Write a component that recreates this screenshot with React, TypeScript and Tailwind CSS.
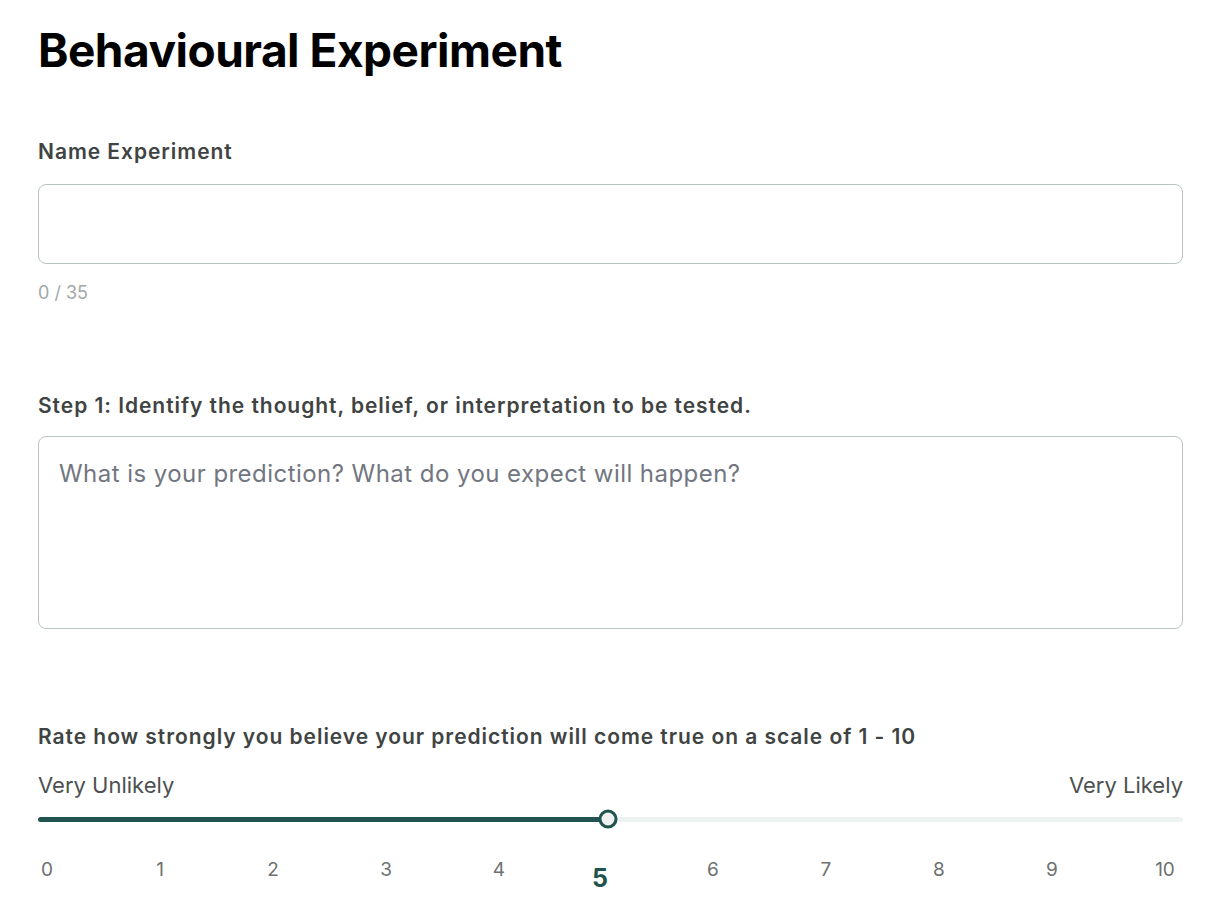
import React, { useState } from 'react';

const font = { fontFamily: 'Inter, "Noto Sans", sans-serif' };

const App: React.FC = () => {
  const [name, setName] = useState('');
  const [prediction, setPrediction] = useState('');
  const [rating] = useState(5);
  const ticks = Array.from({ length: 11 }, (_, i) => i);
  const pct = (rating / 10) * 100;

  return (
    <div className="min-h-screen bg-white pl-[38px] pr-[49px] pt-[22px]" style={font}>
      <h1 className="text-[46px] leading-[56px] font-bold text-black tracking-[-0.5px]">Behavioural Experiment</h1>

      <div className="mt-[62px]">
        <label className="block text-[21px] leading-[24px] font-semibold tracking-[0.95px] text-[#3f4443]">Name Experiment</label>
        <input
          value={name}
          onChange={(e) => setName(e.target.value)}
          maxLength={35}
          className="mt-[20px] block w-full h-[80px] rounded-[8px] border border-[#b9c4c2] px-5 text-[22px] text-[#333] outline-none"
        />
        <p className="mt-[18px] text-[18px] leading-[22px] text-[#a3a8a7]">{name.length} / 35</p>
      </div>

      <div className="mt-[90px]">
        <label className="block text-[21px] leading-[24px] font-semibold tracking-[0.95px] text-[#3f4443]">
          Step 1: Identify the thought, belief, or interpretation to be tested.
        </label>
        <textarea
          value={prediction}
          onChange={(e) => setPrediction(e.target.value)}
          placeholder="What is your prediction? What do you expect will happen?"
          className="mt-[18px] block w-full h-[193px] resize-none rounded-[8px] border border-[#b9c4c2] px-5 py-[22px] text-[24px] leading-[30px] tracking-[0.45px] text-[#333] placeholder:text-[#727680] outline-none"
        />
      </div>

      <div className="mt-[96px]">
        <label className="block text-[21px] leading-[24px] font-semibold tracking-[0.95px] text-[#3f4443]">
          Rate how strongly you believe your prediction will come true on a scale of 1 - 10
        </label>
        <div className="mt-[22px] flex justify-between text-[22px] leading-[28px] text-[#4d5150]">
          <span>Very Unlikely</span>
          <span>Very Likely</span>
        </div>
        <div className="relative mt-[11px] h-[18px] flex items-center">
          <div className="h-[5px] w-full rounded-full bg-[#eef2f1]">
            <div className="h-full rounded-full bg-[#22544f]" style={{ width: `${pct}%` }} />
          </div>
          <div
            className="absolute top-1/2 h-[19px] w-[19px] -translate-x-1/2 -translate-y-1/2 rounded-full border-[3px] border-[#22544f] bg-[#eef1f0]"
            style={{ left: `calc(${pct}% - 3px)` }}
          />
        </div>
        <div className="mt-[30px] flex gap-[95px] items-start">
          {ticks.map((t) =>
            t === rating ? (
              <span key={t} className="w-[6px] mt-[6px] -translate-x-[6px] flex justify-center text-[25px] leading-[28px] font-bold text-[#22544f]">
                {t}
              </span>
            ) : (
              <span key={t} className="w-[18px] flex justify-center text-[19px] leading-[24px] text-[#6d7170]">
                {t}
              </span>
            )
          )}
        </div>
      </div>
    </div>
  );
};

export default App;
